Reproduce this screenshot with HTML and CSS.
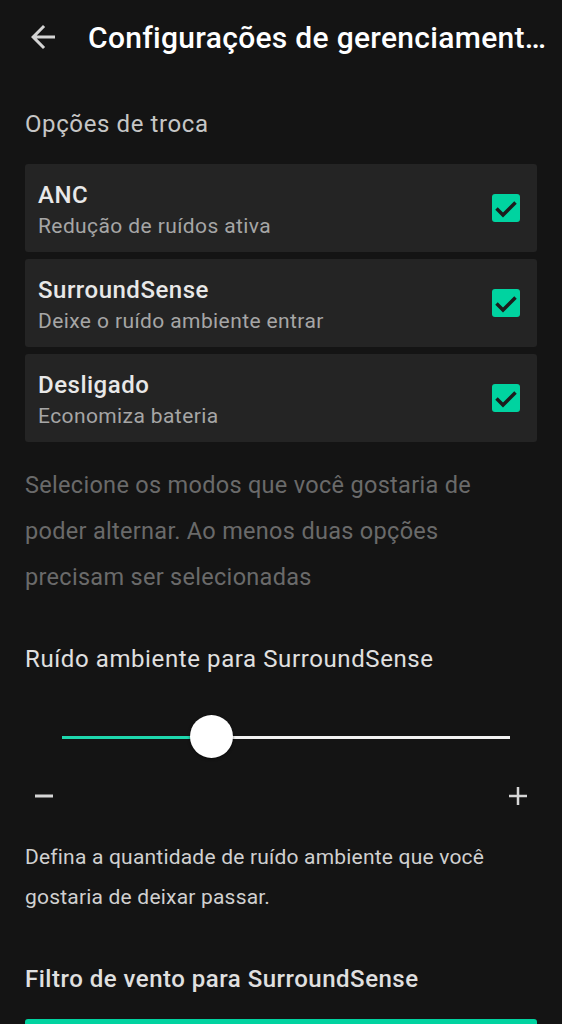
FILE: index.html
```html
<!DOCTYPE html>
<html lang="pt">
<head>
    <meta charset="UTF-8">
    <meta name="viewport" content="width=device-width, initial-scale=1.0">
    <title>Configurações de gerenciamento</title>
    <link rel="stylesheet" href="styles.css">
</head>
<body>
    <header class="topbar">
        <svg class="back" viewBox="0 0 24 24" width="36" height="36">
            <path d="M20 11H7.83l5.59-5.59L12 4l-8 8 8 8 1.41-1.41L7.83 13H20v-2z" fill="currentColor"/>
        </svg>
        <h1 class="title">Configurações de gerenciament…</h1>
    </header>

    <main class="content">
        <h2 class="label">Opções de troca</h2>

        <div class="options">
            <div class="option">
                <div class="option-text">
                    <div class="option-title">ANC</div>
                    <div class="option-sub">Redução de ruídos ativa</div>
                </div>
                <span class="check"><svg viewBox="0 0 28 28" width="28" height="28"><path d="M4.5 14.5l6.5 6.5L23.5 8.5" fill="none" stroke="#1c1c1c" stroke-width="3.5"/></svg></span>
            </div>
            <div class="option">
                <div class="option-text">
                    <div class="option-title">SurroundSense</div>
                    <div class="option-sub">Deixe o ruído ambiente entrar</div>
                </div>
                <span class="check"><svg viewBox="0 0 28 28" width="28" height="28"><path d="M4.5 14.5l6.5 6.5L23.5 8.5" fill="none" stroke="#1c1c1c" stroke-width="3.5"/></svg></span>
            </div>
            <div class="option">
                <div class="option-text">
                    <div class="option-title">Desligado</div>
                    <div class="option-sub">Economiza bateria</div>
                </div>
                <span class="check"><svg viewBox="0 0 28 28" width="28" height="28"><path d="M4.5 14.5l6.5 6.5L23.5 8.5" fill="none" stroke="#1c1c1c" stroke-width="3.5"/></svg></span>
            </div>
        </div>

        <p class="hint">Selecione os modos que você gostaria de poder alternar. Ao menos duas opções precisam ser selecionadas</p>

        <h2 class="label label-bright">Ruído ambiente para SurroundSense</h2>

        <div class="slider">
            <div class="track">
                <div class="track-fill" style="width: 33.4%"></div>
            </div>
            <div class="thumb" style="left: 33.4%"></div>
        </div>

        <div class="steps">
            <svg viewBox="0 0 20 20" width="20" height="20"><path d="M1 10h18" stroke="currentColor" stroke-width="3"/></svg>
            <svg viewBox="0 0 20 20" width="20" height="20"><path d="M1 10h18M10 1v18" stroke="currentColor" stroke-width="2.5"/></svg>
        </div>

        <p class="desc">Defina a quantidade de ruído ambiente que você gostaria de deixar passar.</p>

        <h2 class="label label-strong">Filtro de vento para SurroundSense</h2>

        <div class="bar"></div>
    </main>
</body>
</html>
```

FILE: styles.css
```css
* { box-sizing: border-box; }
html, body { margin: 0; padding: 0; }
body { background: #141414; color: #e6e6e6; font-family: Roboto, "Noto Sans", sans-serif; width: 562px; height: 1024px; overflow: hidden; }

.topbar { display: flex; align-items: center; height: 74px; padding: 0 8px 0 25px; }
.back { color: #d4d4d4; flex: none; }
.title { flex: 1; margin: 0 0 0 27px; font-size: 30px; letter-spacing: 0.3px; font-weight: 500; color: #fff; white-space: nowrap; overflow: hidden; }

.content { padding: 0 25px; }
.label { margin: 36px 0 0; font-size: 24px; line-height: 28px; letter-spacing: 0.6px; font-weight: 400; color: #c6c6c6; }
.label-bright { margin-top: 45px; color: #e0e0e0; }
.label-strong { margin-top: 48px; letter-spacing: 0.5px; font-weight: 500; color: #e0e0e0; }

.options { display: flex; flex-direction: column; gap: 7px; margin-top: 26px; }
.option { display: flex; align-items: center; height: 88px; padding: 0 17px 0 13px; background: #242424; border-radius: 3px; }
.option-text { flex: 1; align-self: flex-start; padding-top: 17px; }
.option-title { font-size: 24px; line-height: 28px; letter-spacing: 0.5px; font-weight: 500; color: #e8e8e8; }
.option-sub { margin-top: 3px; font-size: 21px; line-height: 28px; letter-spacing: 0.4px; color: #a6a6a6; }
.check { display: block; width: 28px; height: 28px; background: #00d3a0; border-radius: 3px; }
.check svg { display: block; }

.hint { margin: 20px 0 0; font-size: 23.5px; line-height: 46px; letter-spacing: 0.3px; color: #6a6a6a; }

.slider { position: relative; height: 44px; margin: 42px 27px 0 37px; display: flex; align-items: center; }
.track { position: relative; width: 100%; height: 3px; background: #f2f2f2; }
.track-fill { height: 100%; background: #1ed8ae; }
.thumb { position: absolute; top: 0; width: 43px; height: 43px; margin-left: -21.5px; background: #fff; border-radius: 50%; box-shadow: 0 1px 3px rgba(0, 0, 0, 0.5); }

.steps { display: flex; justify-content: space-between; margin: 27px 9px 0; color: #d6d6d6; }
.steps svg { display: block; }

.desc { margin: 31px 0 0; font-size: 21px; line-height: 40px; letter-spacing: 0.2px; color: #d0d0d0; }

.bar { margin-top: 26px; height: 40px; background: #00d3a0; border-radius: 3px; }
```
